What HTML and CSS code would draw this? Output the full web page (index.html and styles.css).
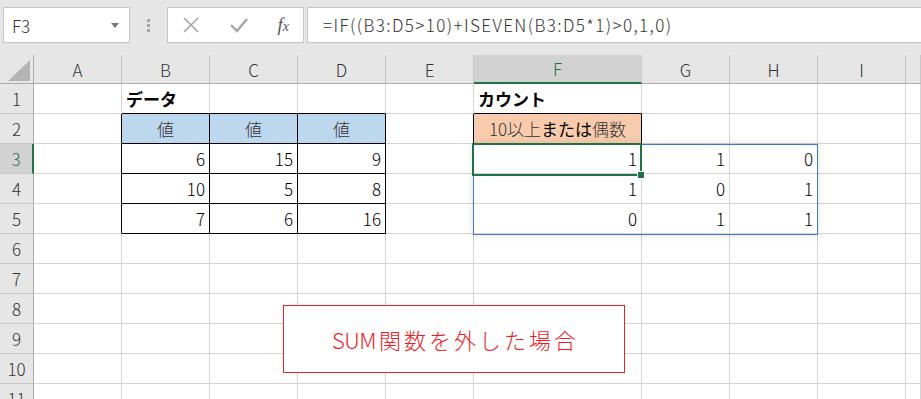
FILE: index.html
```html
<!DOCTYPE html>
<html lang="ja">
<head>
    <meta charset="UTF-8">
    <title>SUM関数を外した場合</title>
    <link rel="stylesheet" href="styles.css">
</head>
<body>
    <div class="toolbar">
        <div class="namebox">
            <span>F3</span>
            <span class="caret"></span>
        </div>
        <div class="dots"><i></i><i></i><i></i></div>
        <div class="fxbox">
            <svg width="18" height="18" viewBox="0 0 18 18"><path d="M2 2 L16 16 M16 2 L2 16" stroke="#a6a6a6" stroke-width="1.6" fill="none"/></svg>
            <svg width="20" height="18" viewBox="0 0 20 18"><path d="M2 9 L8 15 L18 3" stroke="#a6a6a6" stroke-width="2.4" fill="none"/></svg>
            <span class="fx">f<sub>x</sub></span>
        </div>
        <div class="formula">=IF((B3:D5&gt;10)+ISEVEN(B3:D5*1)&gt;0,1,0)</div>
    </div>

    <div class="sheet">
        <div class="corner"><span></span></div>
        <div class="hd">A</div><div class="hd">B</div><div class="hd">C</div><div class="hd">D</div><div class="hd">E</div>
        <div class="hd sel">F</div><div class="hd">G</div><div class="hd">H</div><div class="hd">I</div><div class="hd"></div>

        <div class="rh">1</div>
        <div class="c"></div><div class="c bb bold">データ</div><div class="c bb"></div><div class="c bb"></div><div class="c"></div>
        <div class="c bb bold">カウント</div><div class="c"></div><div class="c"></div><div class="c"></div><div class="c"></div>

        <div class="rh">2</div>
        <div class="c br"></div><div class="c blue br bb">値</div><div class="c blue br bb">値</div><div class="c blue br bb">値</div><div class="c br"></div>
        <div class="c orange br bb">10以上<b>または</b>偶数</div><div class="c"></div><div class="c"></div><div class="c"></div><div class="c"></div>

        <div class="rh sel">3</div>
        <div class="c br"></div><div class="c num br bb">6</div><div class="c num br bb">15</div><div class="c num br bb">9</div><div class="c"></div>
        <div class="c num">1</div><div class="c num">1</div><div class="c num">0</div><div class="c"></div><div class="c"></div>

        <div class="rh">4</div>
        <div class="c br"></div><div class="c num br bb">10</div><div class="c num br bb">5</div><div class="c num br bb">8</div><div class="c"></div>
        <div class="c num">1</div><div class="c num">0</div><div class="c num">1</div><div class="c"></div><div class="c"></div>

        <div class="rh">5</div>
        <div class="c br"></div><div class="c num br bb">7</div><div class="c num br bb">6</div><div class="c num br bb">16</div><div class="c"></div>
        <div class="c num">0</div><div class="c num">1</div><div class="c num">1</div><div class="c"></div><div class="c"></div>

        <div class="rh">6</div>
        <div class="c"></div><div class="c"></div><div class="c"></div><div class="c"></div><div class="c"></div>
        <div class="c"></div><div class="c"></div><div class="c"></div><div class="c"></div><div class="c"></div>

        <div class="rh">7</div>
        <div class="c"></div><div class="c"></div><div class="c"></div><div class="c"></div><div class="c"></div>
        <div class="c"></div><div class="c"></div><div class="c"></div><div class="c"></div><div class="c"></div>

        <div class="rh">8</div>
        <div class="c"></div><div class="c"></div><div class="c"></div><div class="c"></div><div class="c"></div>
        <div class="c"></div><div class="c"></div><div class="c"></div><div class="c"></div><div class="c"></div>

        <div class="rh">9</div>
        <div class="c"></div><div class="c"></div><div class="c"></div><div class="c"></div><div class="c"></div>
        <div class="c"></div><div class="c"></div><div class="c"></div><div class="c"></div><div class="c"></div>

        <div class="rh">10</div>
        <div class="c"></div><div class="c"></div><div class="c"></div><div class="c"></div><div class="c"></div>
        <div class="c"></div><div class="c"></div><div class="c"></div><div class="c"></div><div class="c"></div>

        <div class="rh">11</div>
        <div class="c"></div><div class="c"></div><div class="c"></div><div class="c"></div><div class="c"></div>
        <div class="c"></div><div class="c"></div><div class="c"></div><div class="c"></div><div class="c"></div>

        <!-- overlays -->
        <div class="spill"></div>
        <div class="active"><span class="handle"></span></div>
        <div class="note"><span class="latin">SUM</span><span class="jp">関数を外した場合</span></div>
    </div>
</body>
</html>
```

FILE: styles.css
```css
body {
    margin: 0;
    width: 921px;
    height: 399px;
    overflow: hidden;
    background: #ffffff;
    font-family: "Noto Sans CJK JP", "Noto Sans", sans-serif;
    color: #222;
}
.toolbar {
    height: 55px;
    background: #e6e6e6;
    display: flex;
    align-items: flex-start;
    padding-top: 7px;
    box-sizing: border-box;
}
.namebox {
    margin-left: 3px;
    width: 127px;
    height: 36px;
    box-sizing: border-box;
    background: #fff;
    border: 1px solid #c6c6c6;
    display: flex;
    align-items: center;
    justify-content: space-between;
    padding: 0 10px 0 8px;
    font-size: 17px;
    font-weight: 300;
    color: #333;
}
.caret {
    width: 0;
    height: 0;
    border-left: 4px solid transparent;
    border-right: 4px solid transparent;
    border-top: 5px solid #777;
}
.dots {
    width: 37px;
    height: 36px;
    display: flex;
    flex-direction: column;
    align-items: center;
    justify-content: center;
    gap: 2px;
}
.dots i {
    width: 3px;
    height: 3px;
    background: #a6a6a6;
}
.fxbox {
    width: 137px;
    height: 36px;
    box-sizing: border-box;
    background: #fff;
    border: 1px solid #c6c6c6;
    display: flex;
    align-items: center;
    justify-content: space-between;
    padding: 0 14px 0 14px;
}
.fx {
    font-family: "Liberation Serif", serif;
    font-style: italic;
    font-size: 19px;
    color: #555;
}
.fx sub {
    font-size: 14px;
    vertical-align: 0;
}
.formula {
    margin-left: 3px;
    flex: 1;
    height: 36px;
    box-sizing: border-box;
    background: #fff;
    border: 1px solid #c6c6c6;
    border-right: none;
    padding-left: 15px;
    font-size: 17px;
    font-weight: 300;
    letter-spacing: 1.4px;
    line-height: 34px;
    color: #333;
}

.sheet {
    position: relative;
    display: grid;
    grid-template-columns: 34px repeat(5, 88px) 168px repeat(3, 88px) 1fr;
    grid-template-rows: 29px repeat(11, 30px);
}
.corner, .hd, .rh {
    background: #e6e6e6;
    box-sizing: border-box;
    color: #333;
    font-size: 17px;
    font-weight: 300;
    display: flex;
    align-items: center;
    justify-content: center;
}
.corner {
    border-right: 1px solid #ababab;
    border-bottom: 1px solid #ababab;
}
.corner span {
    width: 0;
    height: 0;
    border-left: 22px solid transparent;
    border-bottom: 21px solid #b4b4b4;
    margin: 3px 0 0 4px;
}
.hd {
    border-right: 1px solid #c8c8c8;
    border-bottom: 1px solid #ababab;
}
.rh {
    border-right: 1px solid #ababab;
    border-bottom: 1px solid #c8c8c8;
}
.hd.sel {
    background: #d2d2d2;
    color: #217346;
    border-bottom: 2px solid #217346;
}
.rh.sel {
    background: #d2d2d2;
    color: #217346;
    border-right: 2px solid #217346;
}
.c {
    box-sizing: border-box;
    border-right: 1px solid #d4d4d4;
    border-bottom: 1px solid #d4d4d4;
    font-size: 17px;
    font-weight: 300;
    display: flex;
    align-items: center;
    padding: 0 4px;
    white-space: nowrap;
    color: #000;
}
.c.br { border-right-color: #000; }
.c.bb { border-bottom-color: #000; }
.c.bold { font-weight: bold; }
.num { justify-content: flex-end; }
.blue {
    background: #bdd7ee;
    justify-content: center;
    color: #333;
}
.orange {
    background: #f8cbad;
    justify-content: center;
    color: #333;
}
.orange b { color: #000; }

.spill {
    position: absolute;
    left: 473px;
    top: 89px;
    width: 345px;
    height: 91px;
    box-sizing: border-box;
    border: 1px solid #3c78d8;
    box-shadow: 0 0 8px rgba(0, 0, 0, 0.12);
}
.active {
    position: absolute;
    left: 472px;
    top: 88px;
    width: 170px;
    height: 33px;
    box-sizing: border-box;
    border: 2px solid #217346;
}
.handle {
    position: absolute;
    right: -5px;
    bottom: -5px;
    width: 6px;
    height: 6px;
    background: #217346;
    border: 1px solid #fff;
}
.note {
    position: absolute;
    left: 283px;
    top: 250px;
    width: 342px;
    height: 68px;
    box-sizing: border-box;
    background: #fff;
    border: 1px solid #e8202a;
    display: flex;
    align-items: center;
    justify-content: center;
    color: #ee1c25;
    font-size: 22px;
    font-weight: 300;
}
.note .latin {
    letter-spacing: -0.5px;
    margin-right: 3px;
}
.note .jp {
    letter-spacing: 3px;
    margin-right: -3px;
}
```
